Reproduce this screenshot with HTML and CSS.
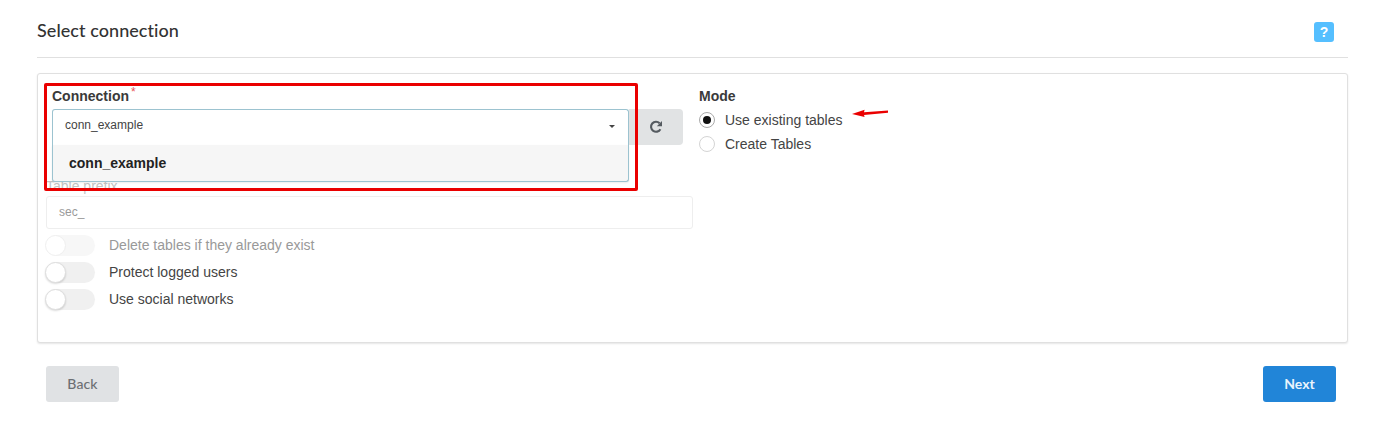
FILE: index.html
```html
<!DOCTYPE html>
<html lang="en">
<head>
<meta charset="utf-8">
<title>Select connection</title>
<link rel="stylesheet" href="styles.css">
</head>
<body>
<div class="page">
  <header class="header">
    <h1 class="title">Select connection</h1>
    <span class="help">?</span>
  </header>
  <section class="card">
    <div class="col-left">
      <div class="conn-group">
        <label class="label conn-label">Connection<sup class="req">*</sup></label>
        <div class="conn-row">
          <div class="select">
            <span class="select-value">conn_example</span>
            <span class="caret"></span>
            <div class="dropdown"><span class="option">conn_example</span></div>
          </div>
          <button class="refresh" type="button" aria-label="Refresh">
            <svg width="14" height="14" viewBox="0 0 14 14" fill="none">
              <path d="M11.4 9.2A5 5 0 1 1 10.6 3.2" stroke="#555b60" stroke-width="2.1"/>
              <path d="M13 1V6.2H7.8Z" fill="#555b60"/>
            </svg>
          </button>
        </div>
      </div>
      <label class="label prefix-label">Table prefix</label>
      <div class="input"><span class="input-value">sec_</span></div>
      <div class="toggle-row disabled"><span class="toggle"><span class="knob"></span></span><span class="toggle-text">Delete tables if they already exist</span></div>
      <div class="toggle-row"><span class="toggle"><span class="knob"></span></span><span class="toggle-text">Protect logged users</span></div>
      <div class="toggle-row"><span class="toggle"><span class="knob"></span></span><span class="toggle-text">Use social networks</span></div>
    </div>
    <div class="col-right">
      <div class="mode-label">Mode</div>
      <div class="radio-row"><span class="radio checked"></span><span>Use existing tables</span></div>
      <div class="radio-row"><span class="radio"></span><span>Create Tables</span></div>
    </div>
    <div class="highlight"></div>
    <svg class="arrow" width="38" height="10" viewBox="0 0 38 10">
      <path d="M37 1.4L13 3.2 13.6 .8 1 5 13.6 8 13 5.9 37 3.8Z" fill="#ea0000"/>
    </svg>
  </section>
  <footer class="footer">
    <button class="btn btn-back" type="button">Back</button>
    <button class="btn btn-next" type="button">Next</button>
  </footer>
</div>
</body>
</html>
```
FILE: styles.css
```css
* { box-sizing: border-box; }
html, body { margin: 0; padding: 0; background: #fff; }
body { font-family: "Liberation Sans", Arial, sans-serif; color: #333; overflow: hidden; }
.page { width: 1376px; height: 434px; padding: 0 28px 0 37px; }

.header { height: 58px; border-bottom: 1px solid #e0e0e0; display: flex; justify-content: space-between; align-items: flex-start; }
.title { margin: 19px 0 0; font: 500 18px/22px Lato, sans-serif; color: #333; letter-spacing: .06px; }
.help { width: 20px; height: 20px; margin: 22px 14px 0 0; border-radius: 3px; background: #55bfff; color: #fff; font: 700 14px/20px "Liberation Sans", sans-serif; text-align: center; }

.card { position: relative; margin-top: 15px; height: 270px; padding: 14px 8px 0; display: flex; gap: 6px; background: #fff; border: 1px solid #e0e0e0; border-radius: 3px; box-shadow: 0 1px 2px rgba(0,0,0,.1); }
.col-left { width: 647px; flex: none; }
.col-right { flex: 1; }

.label { display: block; font-size: 14px; line-height: 16px; }
.conn-group { padding-left: 6px; }
.conn-label { font-weight: 700; color: #3a3a3a; height: 21px; }
.req { color: #e8535a; font-size: 12px; font-weight: 400; line-height: 0; margin-left: 2px; vertical-align: 5px; }
.conn-row { display: flex; }
.select { position: relative; width: 577px; height: 36px; padding: 0 13px 0 12px; display: flex; align-items: center; justify-content: space-between; border: 1px solid #9cc3d0; border-bottom: 0; border-radius: 3px 3px 0 0; background: #fff; font-size: 12px; color: #444; z-index: 2; }
.select-value { position: relative; top: -3px; }
.caret { width: 0; height: 0; position: relative; top: -1px; border-left: 3.5px solid transparent; border-right: 3.5px solid transparent; border-top: 3.5px solid #444; }
.dropdown { position: absolute; top: 35px; left: -1px; right: -1px; height: 37px; padding: 0 16px; display: flex; align-items: center; background: #f6f6f6; border: 1px solid #9cc3d0; border-top: 0; border-radius: 0 0 3px 3px; box-shadow: 0 1px 2px rgba(0,0,0,.08); }
.option { font-size: 14px; font-weight: 700; color: #222; }
.refresh { width: 54px; height: 36px; padding: 0; display: flex; align-items: center; justify-content: center; border: 0; border-radius: 0 4px 4px 0; background: #e1e3e4; }

.prefix-label { margin-top: 33px; color: #c4c4c4; height: 18px; }
.input { width: 647px; height: 33px; padding: 0 12px; display: flex; align-items: center; border: 1px solid #eeeeee; border-radius: 3px; font-size: 12px; color: #9a9a9a; }
.input-value { position: relative; top: -1px; }
.toggle-row { height: 21px; margin-top: 6px; display: flex; align-items: center; gap: 14px; font-size: 14px; color: #444; }
.toggle { position: relative; flex: none; width: 49px; height: 21px; border-radius: 11px; background: #f0f0f0; }
.toggle-text { position: relative; top: -1px; }
.knob { position: absolute; left: -1px; top: 0; width: 21px; height: 21px; border-radius: 50%; background: #fff; border: 1px solid #dedede; box-shadow: 0 1px 2px rgba(0,0,0,.15); }
.disabled .toggle { background: #f7f7f7; }
.disabled .knob { border-color: #efefef; box-shadow: none; }
.disabled .toggle-text { color: #999; }

.mode-label { font-size: 14px; line-height: 16px; font-weight: 700; color: #3a3a3a; height: 20px; }
.radio-row { height: 24px; display: flex; align-items: center; gap: 10px; font-size: 14px; color: #444; }
.radio { position: relative; flex: none; width: 16px; height: 16px; border: 1px solid #d4d4d4; border-radius: 50%; background: #fff; }
.radio.checked { border-color: #aaa; }
.radio.checked::after { content: ""; position: absolute; left: 3px; top: 3px; width: 8px; height: 8px; border-radius: 50%; background: #111; }

.highlight { position: absolute; left: 6px; top: 8.5px; width: 594px; height: 108px; border: 3px solid #ea0000; border-radius: 2px; z-index: 3; pointer-events: none; }
.arrow { position: absolute; left: 813px; top: 35px; }

.footer { display: flex; justify-content: space-between; padding: 23px 12px 0 9px; }
.btn { width: 73px; height: 36px; padding: 0; border: 0; border-radius: 3px; font: 700 14px/36px Lato, sans-serif; }
.btn-back { background: #e0e2e4; color: #6c6f73; font-weight: 500; letter-spacing: .1px; }
.btn-next { background: #2185d8; color: #eaf4fc; }
```
